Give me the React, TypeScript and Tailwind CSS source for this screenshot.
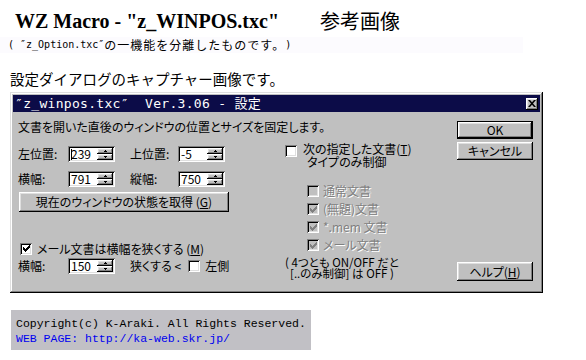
const raised =
  "shadow-[inset_-1px_-1px_#000,inset_1px_1px_#fff,inset_-2px_-2px_#808080,inset_2px_2px_#dfdfdf]";
const sunken =
  "shadow-[inset_1px_1px_#808080,inset_-1px_-1px_#fff,inset_2px_2px_#000,inset_-2px_-2px_#dfdfdf]";

const Check = ({ checked, disabled }: { checked?: boolean; disabled?: boolean }) => (
  <div
    className={`flex h-[12px] w-[12px] shrink-0 items-center justify-center ${
      disabled ? "bg-[#c0c0c0]" : "bg-white"
    } ${sunken}`}
  >
    {checked && (
      <svg width="7" height="7" viewBox="0 0 7 7">
        <path d="M0 2h1v1h1v1h1v-1h1v-1h1v-1h1v-1h1v3h-1v1h-1v1h-1v1h-1v1h-1v-1h-1v-1h-1z" fill={disabled ? "#808080" : "#000"} />
      </svg>
    )}
  </div>
);

const SpinBtn = ({ up }: { up?: boolean }) => (
  <div className={`flex h-[6px] w-full items-center justify-center bg-[#c0c0c0] ${raised}`}>
    <svg width="3" height="2" viewBox="0 0 3 2">
      <path d={up ? "M1 0h1v1h1v1h-3v-1h1z" : "M0 0h3v1h-1v1h-1v-1h-1z"} fill="#000" />
    </svg>
  </div>
);

const SpinEdit = ({ value, caret }: { value: string; caret?: boolean }) => (
  <div className={`flex h-[16px] w-[47px] bg-white p-[2px] ${sunken}`}>
    <div className="flex flex-1 items-center pl-[1px] text-[12px] leading-none">
      {caret && <span className="mr-[-1px] h-[11px] w-px bg-black" />}
      {value}
    </div>
    <div className="flex w-[16px] flex-col">
      <SpinBtn up />
      <SpinBtn />
    </div>
  </div>
);

const Btn = ({ children, def, h }: { children: React.ReactNode; def?: boolean; h: string }) => (
  <div className={`${h} w-full ${def ? "border border-black" : ""}`}>
    <div className={`flex h-full w-full items-center justify-center bg-[#c0c0c0] text-[12px] ${raised}`}>
      {children}
    </div>
  </div>
);

const Disabled = ({ children }: { children: React.ReactNode }) => (
  <span className="text-[#808080] [text-shadow:1px_1px_0_#fff]">{children}</span>
);

export default function App() {
  return (
    <div className="h-[360px] w-[586px] overflow-hidden bg-white text-black">
      {/* HEADING */}
      <div className="flex items-start pl-[15px] pt-[9px] leading-[24px]">
        <h1 className="font-['Liberation_Serif',serif] text-[20px] font-bold">WZ Macro - "z_WINPOS.txc"</h1>
        <span className="ml-[41px] font-['Noto_Sans_CJK_JP',sans-serif] text-[20px]">参考画像</span>
      </div>
      <div className="mt-[4px] flex h-[16px] w-[523px] items-center bg-[#fcfbfe] pl-[8px] text-[12px] leading-[16px]">
        <span className="font-['DejaVu_Sans_Mono',monospace] text-[10px]">( ″z_Option.txc″</span>
        <span className="font-['Noto_Sans_CJK_JP',sans-serif] tracking-[1px]">の一機能を分離したものです。</span>
        <span className="font-['DejaVu_Sans_Mono',monospace] text-[10px]">)</span>
      </div>
      <div className="mt-[16px] h-[20px] pl-[10px] font-['Noto_Sans_CJK_JP',sans-serif] text-[14.5px] leading-[20px]">
        設定ダイアログのキャプチャー画像です。
      </div>

      {/* DIALOG */}
      <div
        className={`ml-[10px] mt-[3px] flex h-[201px] w-[533px] flex-col bg-[#c0c0c0] p-[3px] font-['Noto_Sans_CJK_JP',sans-serif] text-[12px] [font-feature-settings:'palt'] shadow-[inset_-1px_-1px_#000,inset_1px_1px_#dfdfdf,inset_-2px_-2px_#808080,inset_2px_2px_#fff]`}
      >
        <div className="flex h-[17px] items-center justify-between bg-[#0c0c48] pl-[2px] pr-[2px]">
          <span className="font-['DejaVu_Sans_Mono','Noto_Sans_CJK_JP',monospace] text-[13px] leading-none tracking-[0.3px] text-white [font-feature-settings:normal]">
            ″z_winpos.txc″&nbsp;&nbsp;Ver.3.06 - 設定
          </span>
          <div className={`flex h-[12px] w-[12px] items-center justify-center bg-[#c0c0c0] ${raised}`}>
            <svg width="8" height="7" viewBox="0 0 8 7">
              <path d="M0 0h2l2 2.3L6 0h2L5 3.5 8 7H6L4 4.7 2 7H0l3-3.5z" fill="#000" />
            </svg>
          </div>
        </div>

        <div className="flex flex-1">
          <div className="flex flex-1 flex-col pl-[5px] pt-[7px]">
            <div className="h-[16px] leading-[16px]">文書を開いた直後のウィンドウの位置とサイズを固定します。</div>
            <div className="flex items-start">
              {/* LEFT CONTROLS */}
              <div className="flex w-[267px] flex-col pt-[11px]">
                <div className="flex h-[16px] items-center">
                  <span className="w-[50px]">左位置:</span>
                  <SpinEdit value="239" caret />
                  <span className="ml-[15px] w-[48px]">上位置:</span>
                  <SpinEdit value="-5" />
                </div>
                <div className="mt-[9px] flex h-[16px] items-center">
                  <span className="w-[50px]">横幅:</span>
                  <SpinEdit value="791" />
                  <span className="ml-[15px] w-[48px]">縦幅:</span>
                  <SpinEdit value="750" />
                </div>
                <div className="ml-[1px] mt-[5px] w-[210px]">
                  <Btn h="h-[20px]">
                    現在のウィンドウの状態を取得 (<u>G</u>)
                  </Btn>
                </div>
                <div className="mt-[30px] flex h-[13px] items-center">
                  <div className="ml-[2px]">
                    <Check checked />
                  </div>
                  <span className="ml-[5px]">
                    メール文書は横幅を狭くする (<u>M</u>)
                  </span>
                </div>
                <div className="mt-[3px] flex h-[16px] items-center">
                  <span className="w-[50px]">横幅:</span>
                  <SpinEdit value="150" />
                  <span className="ml-[15px]">狭くする &lt;</span>
                  <div className="ml-[7px]">
                    <Check />
                  </div>
                  <span className="ml-[5px]">左側</span>
                </div>
              </div>

              {/* RIGHT GROUP */}
              <div className="flex flex-col pt-[7px]">
                <div className="flex items-start">
                  <div className="mt-[3px]">
                    <Check />
                  </div>
                  <div className="ml-[6px] flex flex-col leading-[13px]">
                    <span>
                      次の指定した文書(<u>T</u>)
                    </span>
                    <span className="pl-[4px]">タイプのみ制御</span>
                  </div>
                </div>
                <div className="ml-[22px] mt-[14px] flex flex-col">
                  {[
                    { t: "通常文書", c: false },
                    { t: "(無題)文書", c: true },
                    { t: "*.mem 文書", c: true },
                    { t: "メール文書", c: true },
                  ].map((r) => (
                    <div key={r.t} className="flex h-[18px] items-center">
                      <Check checked={r.c} disabled />
                      <span className="ml-[4px]">
                        <Disabled>{r.t}</Disabled>
                      </span>
                    </div>
                  ))}
                </div>
                <div className="mt-[3px] flex flex-col text-[11.5px] leading-[11px]">
                  <span>( 4つとも ON/OFF だと</span>
                  <span className="pl-[5px]">[..のみ制御] は OFF )</span>
                </div>
              </div>
            </div>
          </div>

          {/* BUTTONS */}
          <div className="mr-[7px] flex w-[76px] flex-col pb-[9px] pt-[9px]">
            <Btn def h="h-[18px]">
              OK
            </Btn>
            <div className="mt-[3px]">
              <Btn h="h-[18px]">キャンセル</Btn>
            </div>
            <div className="flex-1" />
            <Btn h="h-[19px]">
              ヘルプ(<u>H</u>)
            </Btn>
          </div>
        </div>
      </div>

      {/* COPYRIGHT */}
      <div className="ml-[11px] mt-[17px] h-[40px] w-[300px] bg-[#c1c0c5] pl-[5px] pt-[6px] font-['Liberation_Mono',monospace] text-[11.5px] leading-[15px]">
        <div>Copyright(c) K-Araki. All Rights Reserved.</div>
        <div className="text-[#0000f0]">WEB PAGE: http://ka-web.skr.jp/</div>
      </div>
    </div>
  );
}
